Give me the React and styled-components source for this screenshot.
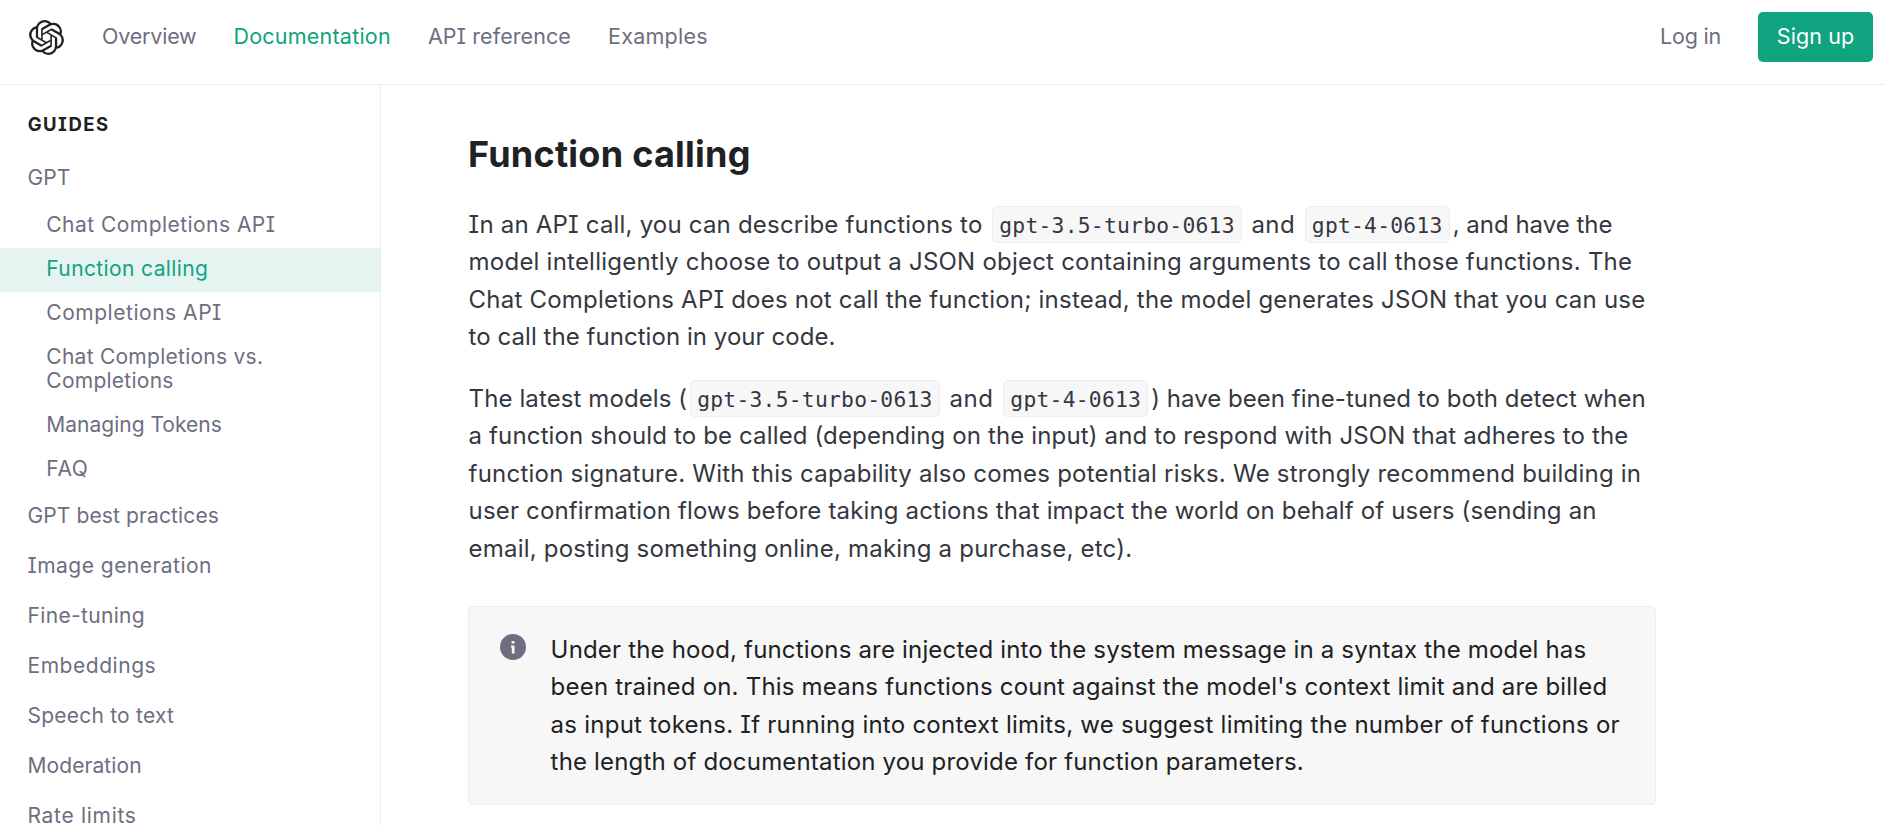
import React from 'react'
import styled, { createGlobalStyle } from 'styled-components'
import { SiOpenai } from 'react-icons/si'

// cv08 switches Inter to the capital I with serifs
const GlobalStyle = createGlobalStyle`
  * {
    box-sizing: border-box;
  }
  body {
    margin: 0;
    overflow: hidden;
    background: #fff;
    color: #353740;
    font-family: Inter, "Liberation Sans", sans-serif;
    font-feature-settings: "cv08";
  }
`

const Page = styled.div`
  display: flex;
  flex-direction: column;
  height: 100vh;
  overflow: hidden;
`
const Header = styled.header`
  display: flex;
  flex: none;
  align-items: flex-start;
  justify-content: space-between;
  height: 85px;
  padding: 12px 12px 0 29px;
  border-bottom: 1px solid #ececf1;
`
const HeaderGroup = styled.div`
  display: flex;
  align-items: center;
  gap: ${(p) => p.$gap}px;
  height: 50px;
`
const Logo = styled(SiOpenai)`
  width: 35px;
  height: 35px;
  margin-right: 1px;
  color: #202123;
`
const NavLink = styled.a`
  height: 50px;
  color: ${(p) => (p.$active ? '#10a37f' : '#6e6e80')};
  font-size: 21.5px;
  line-height: 48px;
  letter-spacing: ${(p) => p.$spacing}px;
  cursor: pointer;
`
const SignUp = styled(NavLink)`
  width: 115px;
  border-radius: 5px;
  background: #10a37f;
  color: #fff;
  text-align: center;
`
const Body = styled.div`
  display: flex;
  flex: 1;
  min-height: 0;
`
const Sidebar = styled.nav`
  flex: none;
  width: 381px;
  padding-top: 23px;
  border-right: 1px solid #ececf1;
  color: #6e6e80;
  font-size: 21px;
`
const SidebarTitle = styled.div`
  height: 46px;
  padding-left: 27.7px;
  color: #202123;
  font-size: 18.5px;
  font-weight: 700;
  line-height: 32px;
  letter-spacing: 1.5px;
`
const Item = styled.div`
  height: 50px;
  padding-left: 27.5px;
  line-height: 47px;
  letter-spacing: ${(p) => p.$spacing}px;
`
const SubItem = styled.div`
  padding: 9px 28px 10.75px 46.3px;
  background: ${(p) => (p.$active ? '#e5f3f1' : 'transparent')};
  color: ${(p) => (p.$active ? '#10a37f' : 'inherit')};
  line-height: 24.25px;
  letter-spacing: ${(p) => p.$spacing}px;
`
const Content = styled.main`
  width: 1188px;
  margin-left: 87px;
  padding-top: 45px;
`
const Title = styled.h1`
  margin: 0 0 27.5px;
  color: #202123;
  font-size: 36px;
  font-weight: 700;
  line-height: 48px;
  letter-spacing: 0.25px;
`
const Paragraph = styled.p`
  margin: 0 0 24px;
  padding-left: 0.6px;
  font-size: 24px;
  line-height: 37.5px;
`
const Line = styled.span`
  display: block;
  height: 37.5px;
  white-space: nowrap;
  letter-spacing: ${(p) => p.$spacing}px;
`
const Spaced = styled.span`
  letter-spacing: ${(p) => p.$spacing}px;
`
const Code = styled.code`
  display: inline-block;
  height: 37px;
  margin: 0 3px;
  padding: 0 6px;
  border: 1px solid #ececf1;
  border-radius: 5px;
  background: #f7f7f8;
  font-family: "DejaVu Sans Mono", monospace;
  font-size: 21.3px;
  letter-spacing: 0.26px;
  line-height: 37px;
  vertical-align: top;
`
const Callout = styled.aside`
  display: flex;
  height: 199px;
  margin-top: 39px;
  padding: 23.5px 31px;
  border: 1px solid #ececf1;
  border-radius: 5px;
  background: #f7f7f7;
  color: #202123;
  font-size: 24px;
  line-height: 37.5px;
`
const InfoSvg = styled.svg`
  flex: none;
  width: 26px;
  height: 26px;
  margin: 3.5px 24.6px 0 0;
`

const InfoIcon = () => (
  <InfoSvg viewBox="0 0 26 26">
    <circle cx="13" cy="13" r="13" fill="#6e6e80" />
    <path d="M11.6 6.9h2.9v2.6h-2.9zM10.9 11.4h3.6v8h-2.7v-5.9h-.9z" fill="#f7f7f7" />
  </InfoSvg>
)

const navLinks = [
  { label: 'Overview', spacing: -0.2 },
  { label: 'Documentation', spacing: 0.22, active: true },
  { label: 'API reference', spacing: 0.08 },
  { label: 'Examples', spacing: 0.27 },
]

const gptPages = [
  { label: 'Chat Completions API', spacing: 0.46 },
  { label: 'Function calling', spacing: 0.38, active: true },
  { label: 'Completions API', spacing: 0.53 },
  { label: 'Chat Completions vs. Completions', spacing: 0.26 },
  { label: 'Managing Tokens', spacing: 0 },
  { label: 'FAQ', spacing: 0.6 },
]

const guides = [
  { label: 'GPT best practices', spacing: 0.12 },
  { label: 'Image generation', spacing: 0.47 },
  { label: 'Fine-tuning', spacing: 0.33 },
  { label: 'Embeddings', spacing: 0.54 },
  { label: 'Speech to text', spacing: 0.22 },
  { label: 'Moderation', spacing: 0.08 },
  { label: 'Rate limits', spacing: 0.7 },
]

const App = () => (
  <Page>
    <GlobalStyle />
    <Header>
      <HeaderGroup $gap={37}>
        <Logo />
        {navLinks.map((link) => (
          <NavLink key={link.label} $active={link.active} $spacing={link.spacing}>
            {link.label}
          </NavLink>
        ))}
      </HeaderGroup>
      <HeaderGroup $gap={37}>
        <NavLink $spacing={-0.2}>Log in</NavLink>
        <SignUp $spacing={0.1}>Sign up</SignUp>
      </HeaderGroup>
    </Header>
    <Body>
      <Sidebar>
        <SidebarTitle>GUIDES</SidebarTitle>
        <Item $spacing={0.12}>GPT</Item>
        {gptPages.map((page) => (
          <SubItem key={page.label} $active={page.active} $spacing={page.spacing}>
            {page.label}
          </SubItem>
        ))}
        {guides.map((guide) => (
          <Item key={guide.label} $spacing={guide.spacing}>
            {guide.label}
          </Item>
        ))}
      </Sidebar>
      <Content>
        <Title>Function calling</Title>
        <Paragraph>
          <Line>
            <Spaced $spacing={0.2}>In an API call, you can describe functions to</Spaced>{' '}
            <Code>gpt-3.5-turbo-0613</Code> <Spaced $spacing={0.4}>and</Spaced>{' '}
            <Code>gpt-4-0613</Code>
            <Spaced $spacing={0}>, and have the</Spaced>
          </Line>
          <Line $spacing={0.225}>
            model intelligently choose to output a JSON object containing arguments to call those functions. The
          </Line>
          <Line $spacing={0.213}>
            Chat Completions API does not call the function; instead, the model generates JSON that you can use
          </Line>
          <Line $spacing={0.05}>to call the function in your code.</Line>
        </Paragraph>
        <Paragraph>
          <Line>
            <Spaced $spacing={0.1}>The latest models (</Spaced>
            <Code>gpt-3.5-turbo-0613</Code> <Spaced $spacing={0.6}>and</Spaced>{' '}
            <Code>gpt-4-0613</Code>
            <Spaced $spacing={0.04}>) have been fine-tuned to both detect when</Spaced>
          </Line>
          <Line $spacing={0.14}>
            a function should to be called (depending on the input) and to respond with JSON that adheres to the
          </Line>
          <Line $spacing={0.226}>
            function signature. With this capability also comes potential risks. We strongly recommend building in
          </Line>
          <Line $spacing={0.16}>
            user confirmation flows before taking actions that impact the world on behalf of users (sending an
          </Line>
          <Line $spacing={0.21}>email, posting something online, making a purchase, etc).</Line>
        </Paragraph>
        <Callout>
          <InfoIcon />
          <div>
            <Line $spacing={0.178}>
              Under the hood, functions are injected into the system message in a syntax the model has
            </Line>
            <Line $spacing={0.203}>
              been trained on. This means functions count against the model's context limit and are billed
            </Line>
            <Line $spacing={0.25}>
              as input tokens. If running into context limits, we suggest limiting the number of functions or
            </Line>
            <Line $spacing={0.18}>the length of documentation you provide for function parameters.</Line>
          </div>
        </Callout>
      </Content>
    </Body>
  </Page>
)

export default App
